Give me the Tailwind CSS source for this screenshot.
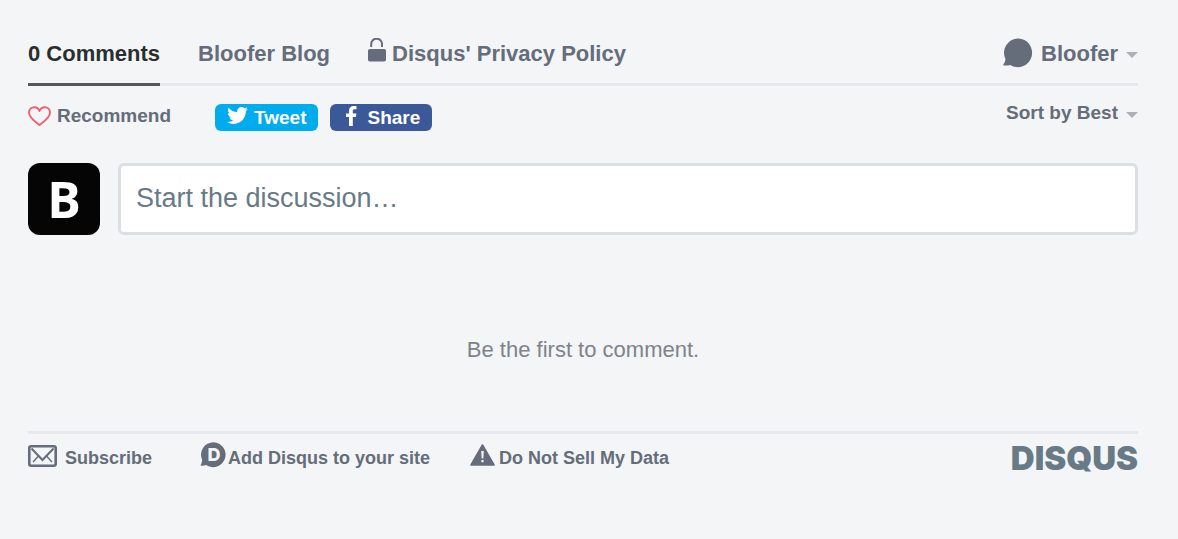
<!DOCTYPE html>
<html lang="en">
<head>
  <meta charset="UTF-8" />
  <meta name="viewport" content="width=device-width, initial-scale=1.0"/>
  <title>Bloofer Blog Comments</title>
  <script src="https://cdn.jsdelivr.net/npm/@tailwindcss/browser@4"></script>
</head>
<body class="bg-[#f3f5f7] font-['Liberation_Sans',Arial,sans-serif] text-[#656c7a]">
  <div class="pt-[37px] pl-7 pr-10 pb-16">

    <!-- Tabs -->
    <header class="flex justify-between border-b-[3px] border-[#e6e8ed] text-[22px] leading-[34px] font-bold">
      <nav class="flex gap-[38px]">
        <a href="#comments" class="-mb-[3px] border-b-[3px] border-[#555759] pb-3 text-[#2a2e2e]">0 Comments</a>
        <a href="#blog">Bloofer Blog</a>
        <a href="#privacy" class="flex gap-1.5">
          <svg class="mt-px h-6 w-[18px]" viewBox="0 0 18 24" fill="none" aria-hidden="true">
            <path d="M3.200 9V5.800a5.300 5 0 0 1 10.800 0V9" stroke="currentColor" stroke-width="2"/>
            <rect x="0" y="11" width="18" height="12.500" rx="1.800" fill="currentColor"/>
          </svg>
          Disqus' Privacy Policy
        </a>
      </nav>
      <button type="button" class="flex h-[34px] items-center gap-2">
        <svg class="mb-0.5 h-[30px] w-[30px]" viewBox="0 0 30 30" fill="currentColor" aria-hidden="true">
          <path d="M15.200.4a14.200 14.400 0 1 1-8 26.500Q4 28 0 27.300Q2.300 24.500 2.500 21.200A14.200 14.400 0 0 1 15.200.4z"/>
        </svg>
        Bloofer
        <svg class="mt-0.5 h-[6px] w-3" viewBox="0 0 12 6" fill="#adb0b6" aria-hidden="true"><path d="M0 0h12L6 6z"/></svg>
      </button>
    </header>

    <!-- Recommend / share / sort -->
    <div class="flex items-start justify-between pt-[14px] text-[19px] leading-[26px] font-bold">
      <div class="flex items-center gap-3">
        <button type="button" class="mr-8 flex items-center gap-[6px]">
          <svg class="h-5 w-[23px]" viewBox="0 0 23 20" fill="none" stroke="#f05f70" stroke-width="1.900" stroke-linejoin="round" aria-hidden="true">
            <path d="M11.500 19C9.300 17 1 12.300 1 6.500C1 3.400 3.400 1.200 6.200 1.200C8.700 1.200 10.600 2.700 11.500 5C12.400 2.700 14.300 1.200 16.800 1.200C19.600 1.200 22 3.400 22 6.500C22 12.300 13.700 17 11.500 19z"/>
          </svg>
          Recommend
        </button>
        <button type="button" class="mt-1 flex h-[27px] items-center gap-[6px] rounded-md bg-[#00aced] px-3 text-white">
          <svg class="mb-1 h-[17px] w-[21px]" viewBox="0 2.200 24 19.600" fill="currentColor" aria-hidden="true">
            <path d="M23.950 4.570a10 10 0 0 1-2.820.770 4.960 4.960 0 0 0 2.160-2.720c-.950.560-2 .960-3.130 1.180a4.920 4.920 0 0 0-8.380 4.480C7.690 8.100 4.070 6.130 1.640 3.160a4.820 4.820 0 0 0-.660 2.480c0 1.710.870 3.210 2.190 4.100a4.900 4.900 0 0 1-2.230-.620v.060a4.920 4.920 0 0 0 3.950 4.830 5 5 0 0 1-2.210.080 4.940 4.940 0 0 0 4.600 3.420A9.870 9.870 0 0 1 0 19.540a14 14 0 0 0 7.550 2.210c9.050 0 14-7.500 14-13.990 0-.210 0-.420-.020-.630a9.940 9.940 0 0 0 2.420-2.560z"/>
          </svg>
          Tweet
        </button>
        <button type="button" class="mt-1 flex h-[27px] items-center gap-[10px] rounded-md bg-[#3b5998] pr-3 pl-4 text-white">
          <svg class="mb-1 h-5 w-[11px]" viewBox="0 0 11 20" fill="currentColor" aria-hidden="true">
            <path d="M3 20V11H0V7.500h3V5c0-3.200 1.900-5 4.700-5 1.300 0 2.500.1 2.800.2v3.100H8.600C7.100 3.300 6.800 4 6.800 5.100v2.400h3.600L9.900 11H6.800v9z"/>
          </svg>
          Share
        </button>
      </div>
      <div class="relative">
        <select id="sort" aria-label="Sort comments" class="field-sizing-content cursor-pointer appearance-none bg-transparent pr-5 font-bold">
          <option>Sort by Best</option>
          <option>Sort by Newest</option>
        </select>
        <svg class="pointer-events-none absolute top-[12px] right-0 h-[6px] w-3" viewBox="0 0 12 6" fill="#adb0b6" aria-hidden="true"><path d="M0 0h12L6 6z"/></svg>
      </div>
    </div>

    <!-- Comment box -->
    <form class="flex gap-[18px] pt-8">
      <div class="flex h-[72px] w-[72px] shrink-0 items-center justify-center rounded-xl bg-[#050505] font-['Open_Sans',sans-serif] text-[50px] font-bold text-white" aria-hidden="true">B</div>
      <textarea id="comment" rows="1" aria-label="Comment" placeholder="Start the discussion…" class="h-[72px] min-w-0 flex-1 resize-none overflow-hidden rounded-md border-[3px] border-[#dbdfe4] bg-white px-[15px] py-4 text-[27px] leading-[32px] placeholder:text-[#687a86]"></textarea>
    </form>

    <p class="pt-[100px] pb-[66px] text-center text-[22px] leading-[30px] text-[#7f8389]">Be the first to comment.</p>

    <!-- Footer -->
    <footer class="flex justify-between border-t-[3px] border-[#e6e8ed] pt-2 text-[18px] leading-[32px] font-bold">
      <div class="flex">
        <a href="#subscribe" class="mr-12 flex gap-2">
          <svg class="mt-[3px] h-[22px] w-[29px]" viewBox="0 0 29 22" fill="none" stroke="currentColor" aria-hidden="true">
            <rect x="1.300" y="1.300" width="26.400" height="19.400" rx="2" stroke-width="2.600"/>
            <path d="M3.500 3.500L14.500 15L25.500 3.500" stroke-width="2"/>
            <path d="M5 17L11 10.500M24 17L18 10.500" stroke-width="1.400"/>
          </svg>
          Subscribe
        </a>
        <a href="#add" class="mr-10 flex gap-0.5">
          <svg class="h-[26px] w-[26px]" viewBox="0 0 26 26" aria-hidden="true">
            <path d="M13.500.2a12.500 12.500 0 1 1-7.500 22.800Q3.500 24 .4 23.500Q2 21 2.200 18A12.500 12.500 0 0 1 13.500.2z" fill="currentColor"/>
            <text x="14" y="19" text-anchor="middle" font-family="Inter, sans-serif" font-weight="800" font-size="18" fill="#f3f5f7">D</text>
          </svg>
          Add Disqus to your site
        </a>
        <a href="#data" class="flex gap-1">
          <svg class="mt-[2px] h-[22px] w-[25px]" viewBox="0 0 25 22" aria-hidden="true">
            <path d="M12.500 1L24 21H1z" fill="currentColor" stroke="currentColor" stroke-width="1.600" stroke-linejoin="round"/>
            <path d="M11.200 7h2.600l-.5 7.500h-1.600zM11.400 16h2.200v2.200h-2.200z" fill="#f3f5f7"/>
          </svg>
          Do Not Sell My Data
        </a>
      </div>
      <a href="#disqus" class="font-['Inter',sans-serif] text-[33px] font-black text-[#687a86]">DISQUS</a>
    </footer>

  </div>
</body>
</html>
